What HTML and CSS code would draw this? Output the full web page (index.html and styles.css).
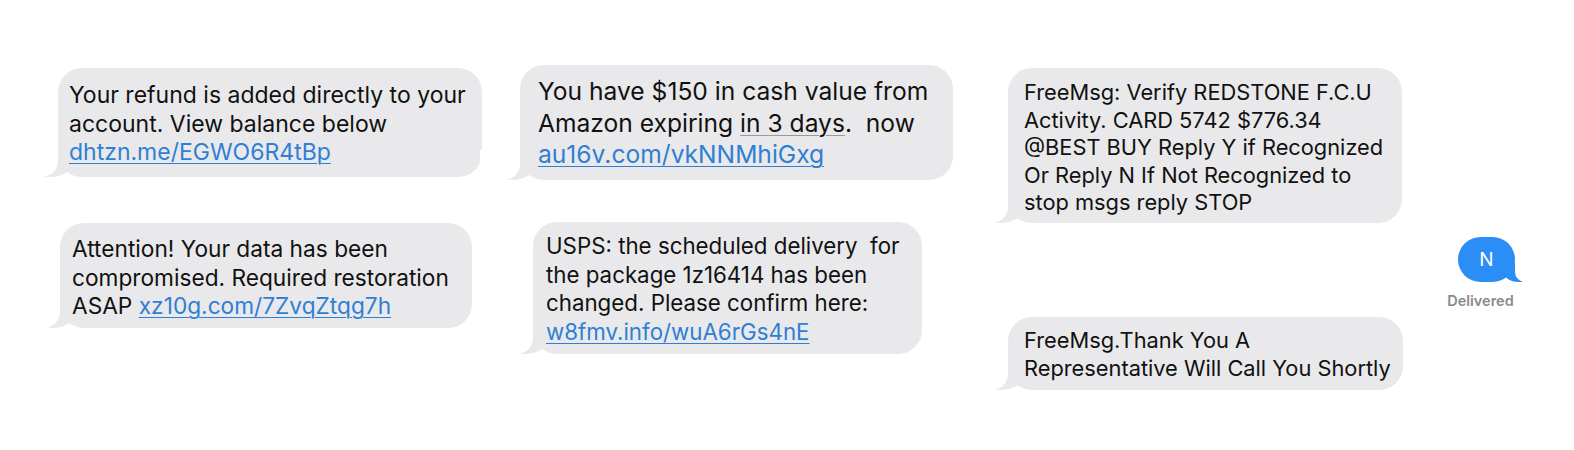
FILE: index.html
```html
<!DOCTYPE html>
<html>
<head>
<meta charset="utf-8">
<link rel="stylesheet" href="styles.css">
</head>
<body>
<div class="board">
  <div class="col col1">
    <div class="bubble b1">Your refund is added directly to your<br>account. View balance below<br><a class="link">dhtzn.me/EGWO6R4tBp</a></div>
    <div class="bubble b4">Attention! Your data has been<br>compromised. Required restoration<br>ASAP <a class="link">xz10g.com/7ZvqZtqg7h</a></div>
  </div>
  <div class="col col2">
    <div class="bubble b2">You have $150 in cash value from<br>Amazon expiring <span class="dl">in 3 days</span>.&nbsp; now<br><a class="link">au16v.com/vkNNMhiGxg</a></div>
    <div class="bubble b5">USPS: the scheduled delivery&nbsp; for<br>the package 1z16414 has been<br>changed. Please confirm here:<br><a class="link">w8fmv.info/wuA6rGs4nE</a></div>
  </div>
  <div class="col col3">
    <div class="bubble b3">FreeMsg: Verify REDSTONE F.C.U<br>Activity. CARD 5742 $776.34<br>@BEST BUY Reply Y if Recognized<br>Or Reply N If Not Recognized to<br>stop msgs reply STOP</div>
    <div class="bubble b6">FreeMsg.Thank You A<br>Representative Will Call You Shortly</div>
  </div>
  <div class="col col4">
    <div class="sent">N</div>
    <div class="status">Delivered</div>
  </div>
</div>
</body>
</html>
```
FILE: styles.css
```css
html, body {
  margin: 0;
  padding: 0;
  background: #ffffff;
}
body {
  width: 1574px;
  height: 450px;
  overflow: hidden;
  font-family: "Inter", "Liberation Sans", sans-serif;
  color: #111111;
}
.board {
  display: flex;
  align-items: flex-start;
  padding-left: 58px;
}
.col {
  display: flex;
  flex-direction: column;
  align-items: flex-start;
}
.col1 { width: 424px; }
.col2 { width: 433px; margin-left: 38px; }
.col3 { width: 395px; margin-left: 55px; }
.col4 { margin-left: 55px; margin-top: 237px; align-items: center; }

.bubble {
  position: relative;
  z-index: 0;
  box-sizing: border-box;
  background: #e9e9eb;
  border-radius: 24px;
  white-space: nowrap;
}
.bubble::before {
  content: "";
  position: absolute;
  z-index: -2;
  bottom: 0;
  left: -13px;
  width: 32px;
  height: 30px;
  background: #e9e9eb;
  border-bottom-right-radius: 26px 22px;
}
.bubble::after {
  content: "";
  position: absolute;
  z-index: -1;
  bottom: 0;
  left: -40px;
  width: 40px;
  height: 30px;
  background: #ffffff;
  border-bottom-right-radius: 16px;
}
.link {
  color: #2f7fd4;
  text-decoration: underline;
  text-decoration-thickness: 1px;
  text-underline-offset: 3px;
}
.dl {
  text-decoration: underline;
  text-decoration-color: #9a9a9a;
  text-decoration-thickness: 1px;
  text-underline-offset: 3px;
}

.b1 {
  margin-top: 68px;
  width: 424px;
  height: 109px;
  padding: 13px 0 0 11px;
  font-size: 23px;
  line-height: 28.5px;
}
.b4 {
  margin-top: 46px;
  margin-left: 2px;
  width: 412px;
  height: 105px;
  padding: 12px 0 0 12px;
  font-size: 22.7px;
  line-height: 28.5px;
}
.b2 {
  margin-top: 65px;
  width: 433px;
  height: 115px;
  padding: 11px 0 0 18px;
  font-size: 24.6px;
  line-height: 31.6px;
}
.b5 {
  margin-top: 42px;
  margin-left: 13px;
  width: 389px;
  height: 132px;
  padding: 10px 0 0 13px;
  font-size: 22.3px;
  line-height: 28.6px;
}
.b3 {
  margin-top: 68px;
  width: 394px;
  height: 155px;
  padding: 11px 0 0 16px;
  font-size: 21.8px;
  line-height: 27.6px;
}
.b6 {
  margin-top: 94px;
  width: 395px;
  height: 73px;
  padding: 10px 0 0 16px;
  font-size: 21.8px;
  line-height: 27.8px;
}

.sent {
  position: relative;
  z-index: 0;
  width: 57px;
  height: 45px;
  border-radius: 23px;
  background: #2b8ef7;
  color: #ffffff;
  font-size: 19px;
  line-height: 45px;
  text-align: center;
}
.sent::before {
  content: "";
  position: absolute;
  z-index: -2;
  bottom: 0;
  right: -7px;
  width: 20px;
  height: 20px;
  background: #2b8ef7;
  border-bottom-left-radius: 16px 14px;
}
.sent::after {
  content: "";
  position: absolute;
  z-index: -1;
  bottom: 0;
  right: -26px;
  width: 26px;
  height: 20px;
  background: #ffffff;
  border-bottom-left-radius: 10px;
}
.status {
  margin-top: 10px;
  margin-left: -12px;
  font-size: 14.5px;
  font-weight: 600;
  color: #8a8a8e;
}
```
